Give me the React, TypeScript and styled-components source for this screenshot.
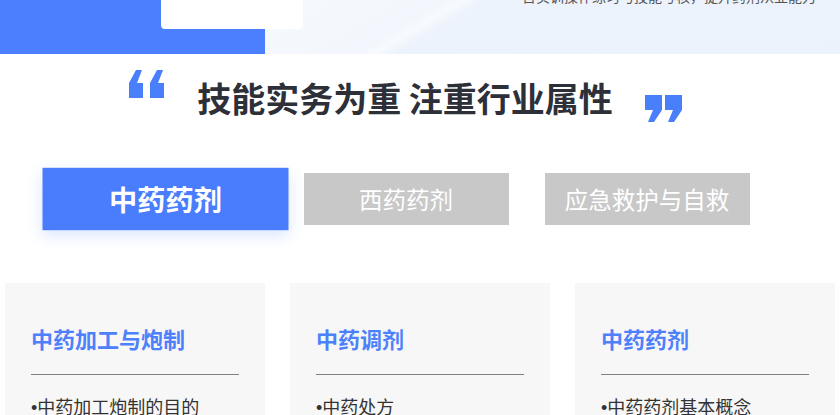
import React from "react";
import styled, { createGlobalStyle } from "styled-components";

const Global = createGlobalStyle`
  html, body { margin: 0; padding: 0; background: #ffffff; }
  body { font-family: "Noto Sans CJK SC", "Noto Sans", sans-serif; overflow: hidden; }
  * { box-sizing: border-box; }
`;

const Page = styled.div`
  width: 840px;
  height: 415px;
  overflow: hidden;
  background: #fff;
`;

const Banner = styled.div`
  position: relative;
  display: flex;
  height: 54px;
  overflow: hidden;
`;

const BlueBlock = styled.div`
  width: 265px;
  background: #4b7ffe;
`;

const LightArea = styled.div`
  flex: 1;
  display: flex;
  justify-content: flex-end;
  align-items: flex-start;
  padding-right: 24px;
  background: linear-gradient(149deg, #f6f9fe 0%, #f3f7fd 27%, #f7fafe 30%, #edf3fc 33%, #ecf2fc 100%);
`;

const BannerText = styled.div`
  margin-top: -11px;
  font-size: 14px;
  line-height: 14px;
  color: #555;
  white-space: nowrap;
`;

const WhiteCard = styled.div`
  position: absolute;
  left: 161px;
  top: 0;
  width: 142px;
  height: 29px;
  background: #fff;
  border-radius: 0 0 4px 4px;
`;

const Section = styled.div`
  padding-right: 28px;
  display: flex;
  flex-direction: column;
  align-items: center;
`;

const TitleRow = styled.div`
  display: flex;
  align-items: flex-start;
  gap: 32px;
  margin-top: 16px;
`;

const Quote = styled.svg<{ $offset: number }>`
  display: block;
  margin-top: ${(p) => p.$offset}px;
  flex: none;
`;

const Title = styled.h1`
  margin: 8px 0 0;
  font-size: 34px;
  line-height: 40px;
  font-weight: 700;
  color: #2d3038;
  white-space: nowrap;
`;

const Tabs = styled.div`
  display: flex;
  gap: 36px;
  margin-top: 50px;
`;

const Tab = styled.div<{ $active?: boolean }>`
  width: 205px;
  height: 52px;
  display: flex;
  align-items: center;
  justify-content: center;
  font-size: 23.5px;
  color: #fff;
  font-weight: ${(p) => (p.$active ? 700 : 400)};
  background: ${(p) => (p.$active ? "#4a7dfd" : "#c8c8c8")};
  transform: ${(p) => (p.$active ? "scale(1.2)" : "none")};
  box-shadow: ${(p) => (p.$active ? "0 5px 12px rgba(74, 125, 253, 0.2)" : "none")};
  position: relative;
  z-index: ${(p) => (p.$active ? 1 : 0)};
`;

const Cards = styled.div`
  display: flex;
  gap: 25px;
  padding: 0 5px;
  margin-top: 58px;
`;

const Card = styled.div`
  width: 260px;
  height: 200px;
  background: #f7f7f7;
  padding: 0 26px;
`;

const CardTitle = styled.h2`
  margin: 40px 0 0;
  font-size: 22px;
  line-height: 30px;
  font-weight: 700;
  color: #4d80fb;
`;

const Divider = styled.div`
  height: 1px;
  background: #808080;
  margin-top: 21px;
`;

const List = styled.ul`
  list-style: none;
  margin: 21px 0 0;
  padding: 0;
`;

const Item = styled.li`
  font-family: "Liberation Sans", "Noto Sans CJK SC", sans-serif;
  font-size: 18px;
  line-height: 24px;
  color: #333;
`;

const OpenQuote = () => (
  <Quote $offset={0} width="36" height="28" viewBox="0 0 36 28">
    <polygon fill="#4a7ffb" points="14,28 0,28 0,13 7,0 13,0 8,13 14,13" />
    <polygon fill="#4a7ffb" points="35,28 21,28 21,13 28,0 34,0 29,13 35,13" />
  </Quote>
);

const CloseQuote = () => (
  <Quote $offset={25} width="38" height="28" viewBox="0 0 38 28">
    <polygon fill="#4a7ffb" points="0,0 17,0 17,15 9,27 3,27 8,15 0,15" />
    <polygon fill="#4a7ffb" points="20,0 37,0 37,15 29,27 23,27 28,15 20,15" />
  </Quote>
);

const tabs = ["中药药剂", "西药药剂", "应急救护与自救"];

const cards = [
  { title: "中药加工与炮制", items: ["•中药加工炮制的目的"] },
  { title: "中药调剂", items: ["•中药处方"] },
  { title: "中药药剂", items: ["•中药药剂基本概念"] },
];

export default function App() {
  return (
    <Page>
      <Global />
      <Banner>
        <BlueBlock />
        <LightArea>
          <BannerText>含实训操作练习与技能考核，提升药剂从业能力</BannerText>
        </LightArea>
        <WhiteCard />
      </Banner>
      <Section>
        <TitleRow>
          <OpenQuote />
          <Title>技能实务为重 注重行业属性</Title>
          <CloseQuote />
        </TitleRow>
        <Tabs>
          {tabs.map((t, i) => (
            <Tab key={t} $active={i === 0}>
              {t}
            </Tab>
          ))}
        </Tabs>
      </Section>
      <Cards>
        {cards.map((c) => (
          <Card key={c.title}>
            <CardTitle>{c.title}</CardTitle>
            <Divider />
            <List>
              {c.items.map((it) => (
                <Item key={it}>{it}</Item>
              ))}
            </List>
          </Card>
        ))}
      </Cards>
    </Page>
  );
}
